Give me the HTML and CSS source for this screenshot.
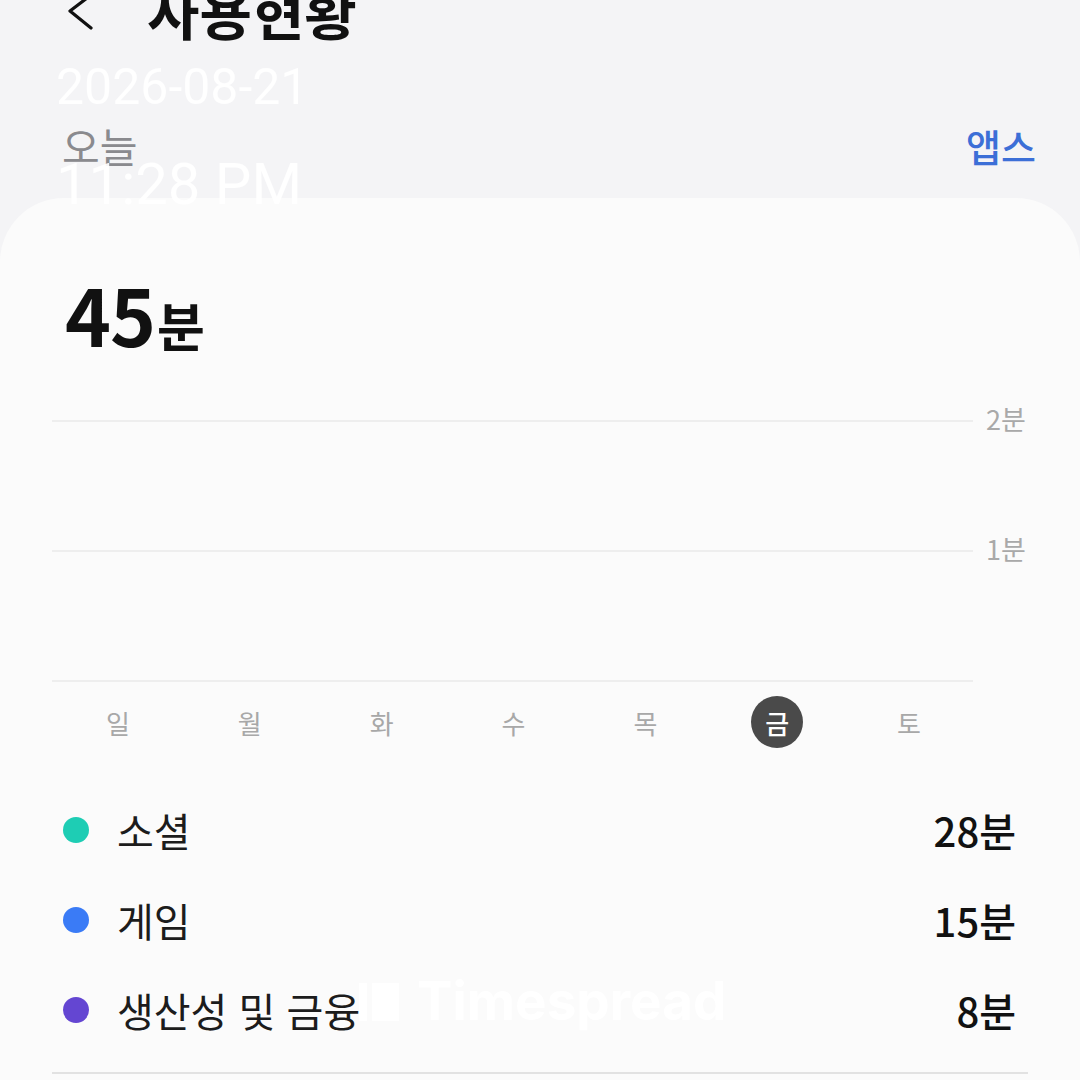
FILE: index.html
```html
<!DOCTYPE html>
<html lang="ko">
<head>
  <meta charset="UTF-8" />
  <meta name="viewport" content="width=device-width, initial-scale=1.0" />
  <title>사용현황</title>
  <link rel="stylesheet" href="styles.css">
</head>
<body>
  <div class="top">
    <header class="appbar">
      <svg class="back" width="32" height="40" viewBox="0 0 32 40"><polyline points="26,3 5,19 26,36" fill="none" stroke="#111" stroke-width="3.2" stroke-linecap="round" stroke-linejoin="round"/></svg>
      <h1>사용현황</h1>
    </header>
    <div class="subbar">
      <span class="today">오늘</span>
      <a class="apps">앱스</a>
    </div>
  </div>

  <main class="card">
    <div class="total"><span class="num">45</span><span class="unit">분</span></div>

    <div class="chart">
      <div class="grid-row"><div class="line"></div><span class="tick">2분</span></div>
      <div class="grid-row"><div class="line"></div><span class="tick">1분</span></div>
      <div class="grid-row"><div class="line"></div><span class="tick"></span></div>
    </div>

    <div class="days">
      <span class="day">일</span>
      <span class="day">월</span>
      <span class="day">화</span>
      <span class="day">수</span>
      <span class="day">목</span>
      <span class="day"><b class="today-mark">금</b></span>
      <span class="day">토</span>
    </div>

    <ul class="legend">
      <li><i class="dot social"></i><span class="label">소셜</span><span class="value">28분</span></li>
      <li><i class="dot game"></i><span class="label">게임</span><span class="value">15분</span></li>
      <li><i class="dot work"></i><span class="label">생산성 및 금융</span><span class="value">8분</span></li>
    </ul>
    <div class="divider"></div>
  </main>

  <div class="stamp">
    <div class="stamp-date">2026-08-21</div>
    <div class="stamp-time">11:28 PM</div>
  </div>

  <div class="watermark">
    <svg width="40" height="40" viewBox="0 0 40 40"><rect x="0" y="1" width="8" height="38" fill="#fff"/><rect x="13" y="1" width="27" height="38" fill="#fff"/></svg>
    <span>Timespread</span>
  </div>
</body>
</html>
```

FILE: styles.css
```css
body { margin: 0; background: #f4f4f6; font-family: "Noto Sans CJK KR", "Noto Sans", sans-serif; color: #111; overflow: hidden; }

.top { display: flow-root; height: 198px; }
.appbar { display: flex; align-items: center; height: 60px; margin-top: -20px; }
.back { margin-left: 65px; margin-top: 4px; }
.appbar h1 { margin: 0 0 0 50px; font-size: 57px; line-height: 1; font-weight: 700; color: #111; }

.subbar { display: flex; justify-content: space-between; align-items: center; margin-top: 85px; padding: 0 44px 0 62px; font-size: 38px; line-height: 1; }
.today { color: #8a8a8e; font-size: 41px; }
.apps { color: #3c6fd7; font-weight: 500; }

.card { background: #fbfbfb; border-radius: 64px 64px 0 0; padding: 76px 52px 0; min-height: 900px; }

.total { padding-left: 13px; line-height: 1; }
.total .num { font-size: 78px; font-weight: 700; letter-spacing: -1px; }
.total .unit { font-size: 52px; font-weight: 700; margin-left: 2px; }

.chart { margin-top: 54px; display: flex; flex-direction: column; gap: 100px; }
.grid-row { display: flex; align-items: center; height: 30px; }
.line { flex: 1; height: 2px; background: #eeeeee; }
.tick { width: 42px; margin-left: 13px; margin-top: -6px; font-size: 27px; color: #a9a9a9; }

.days { display: grid; grid-template-columns: repeat(7, 1fr); width: 923px; height: 52px; }
.day { display: flex; align-items: center; justify-content: center; font-size: 26px; color: #a8a8a8; }
.today-mark { display: flex; align-items: center; justify-content: center; width: 52px; height: 52px; border-radius: 50%; background: #4a4a4a; color: #fff; font-weight: 500; }

.legend { list-style: none; margin: 37px 0 0; padding: 0 12px 0 11px; }
.legend li { display: flex; align-items: center; height: 90px; font-size: 40px; }
.dot { width: 26px; height: 26px; border-radius: 50%; margin-right: 28px; }
.dot.social { background: #1ecdb4; }
.dot.game { background: #3a7bf6; }
.dot.work { background: #6446d2; }
.label { flex: 1; color: #1c1c1c; }
.value { color: #111; font-weight: 500; }

.divider { margin-top: 17px; height: 2px; background: #e2e2e2; }

.stamp { position: absolute; left: 56px; top: 62px; font-family: Roboto, "Liberation Sans", sans-serif; color: rgba(255,255,255,0.92); line-height: 1; }
.stamp-date { font-size: 50px; }
.stamp-time { font-size: 58px; margin-top: 43px; }

.watermark { position: absolute; left: 359px; top: 975px; display: flex; align-items: center; gap: 18px; font-family: Inter, "Liberation Sans", sans-serif; font-weight: 700; font-size: 53px; line-height: 1; color: rgba(255,255,255,0.95); }
```
